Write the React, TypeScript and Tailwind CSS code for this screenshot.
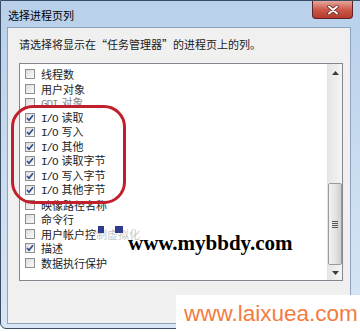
import React from "react";

type Item = { label: string; checked: boolean; io?: boolean; dim?: boolean };

const items: Item[] = [
  { label: "线程数", checked: false },
  { label: "用户对象", checked: false },
  { label: "GDI 对象", checked: false, dim: true },
  { label: "读取", checked: true, io: true },
  { label: "写入", checked: true, io: true },
  { label: "其他", checked: true, io: true },
  { label: "读取字节", checked: true, io: true },
  { label: "写入字节", checked: true, io: true },
  { label: "其他字节", checked: true, io: true },
  { label: "映像路径名称", checked: false },
  { label: "命令行", checked: false },
  { label: "用户帐户控制虚拟化", checked: false },
  { label: "描述", checked: true },
  { label: "数据执行保护", checked: false },
];

function Check({ on }: { on: boolean }) {
  return (
    <div className="w-[10px] h-[10px] border border-[#8e8f8f] bg-gradient-to-br from-[#dcdcdc] to-[#fbfbfb] flex items-center justify-center shrink-0">
      {on && (
        <svg width="8" height="8" viewBox="0 0 8 8">
          <path d="M1 4 L3 6.2 L7 1.2" fill="none" stroke="#2b4a8c" strokeWidth="1.6" />
        </svg>
      )}
    </div>
  );
}

const mono = { fontFamily: '"Liberation Mono", monospace' };

export default function App() {
  const cjk = { fontFamily: '"Noto Sans CJK SC", "Noto Sans", sans-serif' };
  return (
    <div className="w-[360px] h-[332px] bg-white relative overflow-hidden" style={cjk}>
      {/* window */}
      <div className="h-[329px] w-[366px] border border-[#3c4c62] rounded-b-[6px] bg-gradient-to-b from-[#b8d0ea] via-[#c9dcf0] to-[#d8e6f5] flex flex-col pl-[6px] pr-[14px] pb-[4px]">
        {/* title bar */}
        <div className="h-[26px] flex items-start shrink-0">
          <div className="text-[11px] leading-none text-black pt-[9px] pl-[1px] flex-1">选择进程页列</div>
          <div className="w-[41px] h-[18px] mr-[-2px] rounded-b-[4px] border border-[#5c2424] border-t-0 bg-gradient-to-b from-[#e4a69a] via-[#cc5a4c] to-[#b53a2c] flex items-center justify-center">
            <svg width="12" height="10" viewBox="0 0 12 10">
              <path d="M2 1.5 L10 8.5 M10 1.5 L2 8.5" stroke="#5a1d17" strokeWidth="3.4" strokeLinecap="round" />
              <path d="M2 1.5 L10 8.5 M10 1.5 L2 8.5" stroke="#ffffff" strokeWidth="2" strokeLinecap="round" />
            </svg>
          </div>
        </div>
        {/* client area */}
        <div className="flex-1 bg-[#f0f0f0] border border-[#8ea3be] flex flex-col pl-[11px] pr-[7px]">
          <div className="text-[11px] leading-none text-[#1a1a1a] pt-[11px] h-[35px] shrink-0 whitespace-nowrap">
            请选择将显示在“任务管理器”的进程页上的列。
          </div>
          <div className="h-[218px] border border-[#828790] bg-white flex">
            <div className="flex-1 flex flex-col pt-[3px] pl-[5px]">
              {items.map((it, i) => (
                <div key={i} className="h-[14.5px] flex items-center gap-[6px]">
                  <Check on={it.checked} />
                  <span className={`text-[11px] leading-[12px] whitespace-nowrap ${it.dim ? "text-[#8a8a8a]" : "text-[#222]"}`}>
                    {it.io && (
                      <span className="tracking-[-1.1px] mr-[4px]" style={mono}>
                        I/O
                      </span>
                    )}
                    {it.label === "GDI 对象" ? (
                      <>
                        <span className="tracking-[-1.1px] mr-[4px]" style={mono}>GDI</span>
                        对象
                      </>
                    ) : it.label === "用户帐户控制虚拟化" ? (
                      <>
                        用户帐户控<span className="text-[#c8c8c8]">制虚拟化</span>
                      </>
                    ) : (
                      it.label
                    )}
                  </span>
                </div>
              ))}
            </div>
            {/* scrollbar */}
            <div className="w-[15px] bg-gradient-to-r from-[#e6e6e6] to-[#f4f4f4] border-l border-[#e3e3e3] flex flex-col items-center">
              <div className="h-[17px] flex items-center justify-center">
                <svg width="7" height="4" viewBox="0 0 7 4">
                  <path d="M0 4 L3.5 0 L7 4 Z" fill="#3c3c3c" />
                </svg>
              </div>
              <div className="flex-1" />
              <div className="w-[14px] h-[82px] border border-[#9a9a9a] rounded-[2px] bg-gradient-to-r from-[#f2f2f2] via-[#e4e4e4] to-[#cfcfcf] flex flex-col items-center justify-center gap-[1px]">
                <div className="w-[6px] h-[1px] bg-[#555]" />
                <div className="w-[6px] h-[1px] bg-[#555]" />
                <div className="w-[6px] h-[1px] bg-[#555]" />
                <div className="w-[6px] h-[1px] bg-[#555]" />
              </div>
              <div className="h-[15px] flex items-center justify-center">
                <svg width="7" height="4" viewBox="0 0 7 4">
                  <path d="M0 0 L7 0 L3.5 4 Z" fill="#3c3c3c" />
                </svg>
              </div>
            </div>
          </div>
        </div>
      </div>

      {/* red marker circle */}
      <div className="absolute left-[11px] top-[105px] w-[115px] h-[99px] rounded-[22px] border-[3px] border-[#c0202b] pointer-events-none" />

      {/* blue blots */}
      <div className="absolute left-[98px] top-[226px] w-[6px] h-[7px] bg-[#2f3b8c]" />
      <div className="absolute left-[115px] top-[226px] w-[8px] h-[7px] bg-[#2f3b8c]" />

      {/* watermark 1 */}
      <div
        className="absolute left-[128px] top-[233px] text-[21px] leading-none font-bold text-black whitespace-nowrap"
        style={{ fontFamily: '"Liberation Serif", serif' }}
      >
        www.mybbdy.com
      </div>

      {/* watermark 2 */}
      <div className="absolute left-[176px] top-[295px] w-[184px] h-[37px] bg-white flex items-center pl-[8px] pt-[2px]">
        <span className="text-[22.5px] leading-none text-[#f47b3f] whitespace-nowrap" style={{ fontFamily: '"Liberation Sans", sans-serif' }}>
          www.laixuea.com
        </span>
      </div>
    </div>
  );
}
